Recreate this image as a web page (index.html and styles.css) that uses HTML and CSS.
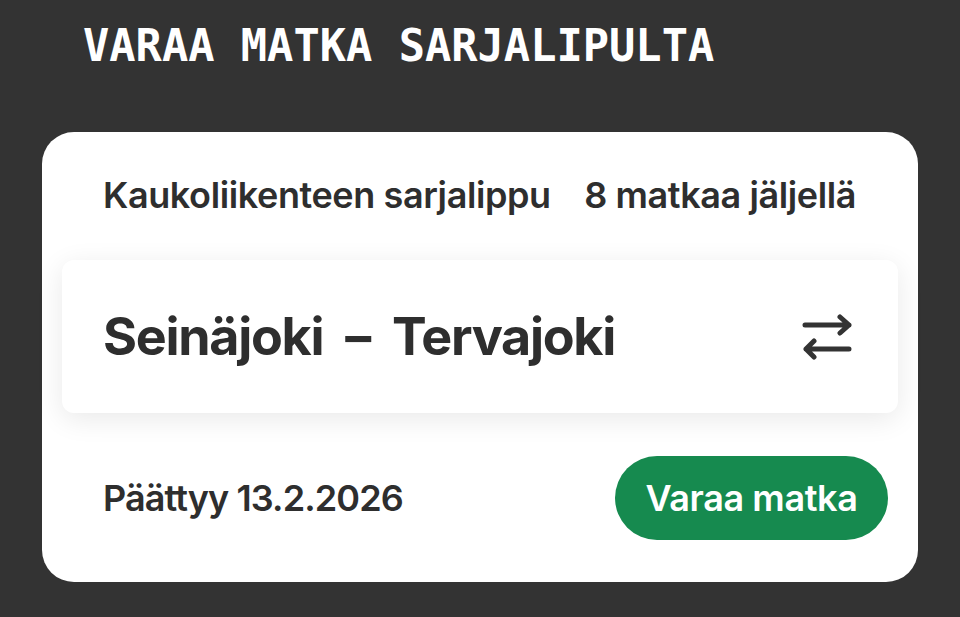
FILE: index.html
```html
<!DOCTYPE html>
<html lang="fi">
<head>
<meta charset="utf-8">
<link rel="stylesheet" href="styles.css">
</head>
<body>
<h1 class="title">VARAA MATKA SARJALIPULTA</h1>
<section class="card">
  <div class="card-head">
    <span class="ticket-name">Kaukoliikenteen sarjalippu</span>
    <span class="trips-left">8 matkaa jäljellä</span>
  </div>
  <div class="route">
    <div class="route-name">
      <span>Seinäjoki</span>
      <span class="dash">–</span>
      <span>Tervajoki</span>
    </div>
    <svg class="swap" width="50" height="46" viewBox="0 0 50 46" aria-hidden="true">
      <g fill="none" stroke="#333" stroke-width="5" stroke-linecap="round" stroke-linejoin="round">
        <path d="M3 11 H47 M38 3 L47 11 L38 19"/>
        <path d="M47 35 H4 M12 27 L4 35 L12 43"/>
      </g>
    </svg>
  </div>
  <div class="card-foot">
    <span class="valid">Päättyy 13.2.2026</span>
    <button class="book">Varaa matka</button>
  </div>
</section>
</body>
</html>
```
FILE: styles.css
```css
html, body {
  margin: 0;
  padding: 0;
}
body {
  background: #333333;
  width: 960px;
  height: 617px;
  overflow: hidden;
  font-family: Inter, "Noto Sans", sans-serif;
  color: #2e2e2e;
}
.title {
  margin: 0;
  padding: 21px 0 0 83px;
  height: 132px;
  box-sizing: border-box;
  font-family: "DejaVu Sans Mono", "Liberation Mono", monospace;
  font-weight: 700;
  font-size: 43.7px;
  line-height: 50px;
  color: #ffffff;
  letter-spacing: 0;
}
.card {
  margin-left: 42px;
  width: 876px;
  box-sizing: border-box;
  background: #ffffff;
  border-radius: 32px;
  padding: 20px 20px 42px;
}
.card-head {
  height: 108px;
  box-sizing: border-box;
  padding: 25px 42px 0 41px;
  display: flex;
  justify-content: space-between;
  align-items: flex-start;
  font-size: 36px;
  font-weight: 600;
  letter-spacing: -0.4px;
  line-height: 36px;
}
.route {
  height: 153px;
  box-sizing: border-box;
  background: #ffffff;
  border-radius: 12px;
  box-shadow: 0 6px 28px rgba(0, 0, 0, 0.09);
  display: flex;
  align-items: center;
  justify-content: space-between;
  padding: 0 46px 0 41px;
}
.route-name {
  display: flex;
  align-items: baseline;
  gap: 22px;
  font-size: 52px;
  font-weight: 700;
  letter-spacing: -1.3px;
  line-height: 60px;
}
.swap {
  display: block;
}
.card-foot {
  margin-top: 43px;
  display: flex;
  align-items: center;
  justify-content: space-between;
  padding: 0 10px 0 41px;
}
.valid {
  font-size: 36px;
  font-weight: 600;
  letter-spacing: -0.9px;
}
.book {
  width: 273px;
  height: 84px;
  border: none;
  border-radius: 42px;
  background: #168a4f;
  color: #ffffff;
  font-family: Inter, "Noto Sans", sans-serif;
  font-size: 36px;
  font-weight: 600;
  letter-spacing: -0.4px;
  padding: 0;
}
```
